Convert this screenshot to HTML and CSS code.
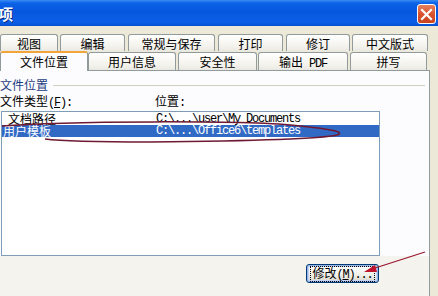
FILE: index.html
```html
<!DOCTYPE html>
<html lang="zh-CN">
<head>
<meta charset="utf-8">
<title>选项</title>
<link rel="stylesheet" href="styles.css">
</head>
<body>
<div class="window">
  <div class="titlebar">
    <span class="title">选项</span>
    <span class="close">
      <svg width="13" height="13" viewBox="0 0 13 13"><path d="M2 2 L11 11 M11 2 L2 11" stroke="#fff" stroke-width="2.2" stroke-linecap="square"/></svg>
    </span>
  </div>
  <div class="body">
    <div class="tabs">
      <div class="row row1">
        <div class="tab w58">视图</div>
        <div class="tab w65 ml2">编辑</div>
        <div class="tab w87 ml3">常规与保存</div>
        <div class="tab w65 ml3">打印</div>
        <div class="tab w64 ml3">修订</div>
        <div class="tab w76 ml2">中文版式</div>
      </div>
      <div class="row row2">
        <div class="tab sel w88">文件位置</div>
        <div class="tab w88">用户信息</div>
        <div class="tab w79 ml2">安全性</div>
        <div class="tab w90 ml1">输出<span class="asc"> PDF</span></div>
        <div class="tab w77 ml2">拼写</div>
      </div>
    </div>
    <div class="panel">
      <div class="top">
        <div class="group-title"><span>文件位置</span><span class="gline"></span></div>
        <div class="labels">
          <span class="col1">文件类型<span class="asc">(<u>F</u>):</span></span>
          <span class="col2">位置<span class="asc">:</span></span>
        </div>
        <div class="listbox">
          <div class="item">
            <span class="name n1">文档路径</span>
            <span class="path asc">C:\...\user\My Documents</span>
          </div>
          <div class="item selected">
            <span class="name n2">用户模板</span>
            <span class="path asc">C:\...\Office6\templates</span>
          </div>
        </div>
      </div>
      <div class="footer">
        <button class="btn"><span class="focus">修改<span class="asc">(<u>M</u>)...</span></span></button>
      </div>
    </div>
  </div>
</div>
<svg class="marks" width="438" height="296" viewBox="0 0 438 296">
  <path d="M2 126 C 60 121, 250 120, 300 126 C 330 129, 346 132, 337 135 C 320 139, 250 141, 150 142 C 95 142, 60 141, 45 139" fill="none" stroke="#6e1a34" stroke-width="1.5"/>
  <path d="M425 252 L 372 269" stroke="#9a1830" stroke-width="1.3" fill="none"/>
  <path d="M364 272 L 375 265 L 377 272 Z" fill="#c0142c"/>
</svg>
</body>
</html>
```
FILE: styles.css
```css
html, body {
  margin: 0;
  padding: 0;
}
body {
  width: 438px;
  height: 296px;
  overflow: hidden;
  background: #ece9d8;
  font-family: "Noto Sans CJK SC", "Liberation Sans", sans-serif;
  font-size: 12px;
  color: #000;
  position: relative;
}
.window {
  width: 438px;
  height: 296px;
  display: flex;
  flex-direction: column;
}
.titlebar {
  height: 26px;
  flex: none;
  display: flex;
  align-items: center;
  justify-content: space-between;
  background: linear-gradient(#3b8cf5 0%, #0c62e6 12%, #0757de 45%, #0a5fe6 85%, #0650d0 100%);
  overflow: hidden;
}
.title {
  margin-left: -17px;
  color: #fff;
  font-weight: bold;
  font-size: 15px;
  line-height: 18px;
  margin-top: 1px;
  text-shadow: 1px 1px 0 #0a2f8a;
}
.close {
  width: 19px;
  height: 20px;
  margin-right: 2px;
  margin-top: 2px;
  box-sizing: border-box;
  border: 1px solid #fff;
  border-radius: 3px;
  background: linear-gradient(#e8805c, #d9542e 50%, #c9431e);
  display: flex;
  align-items: center;
  justify-content: center;
}
.body {
  flex: 1;
  display: flex;
  flex-direction: column;
  padding-top: 8px;
  width: 430px;
}
.tabs {
  display: flex;
  flex-direction: column;
}
.row {
  display: flex;
}
.row1 {
  height: 17px;
}
.row2 {
  height: 19px;
  align-items: flex-end;
}
.tab {
  box-sizing: border-box;
  border: 1px solid #919b9c;
  border-bottom: none;
  border-radius: 3px 3px 0 0;
  background: linear-gradient(#ffffff, #f3f2ec 70%, #e9e8e2);
  text-align: center;
  flex: none;
  white-space: pre;
}
.row1 .tab {
  height: 17px;
  line-height: 17px;
}
.row2 .tab {
  height: 18px;
  line-height: 18px;
}
.row2 .tab.sel {
  height: 20px;
  margin-bottom: -1px;
  background: #fcfcfe;
  border-top: 2px solid #f2a53a;
  border-left-color: #919b9c;
  position: relative;
  z-index: 2;
  line-height: 18px;
}
.w58 { width: 58px; }
.w64 { width: 64px; }
.w65 { width: 65px; }
.w76 { width: 76px; }
.w77 { width: 77px; }
.w79 { width: 79px; }
.w87 { width: 87px; }
.w88 { width: 88px; }
.w90 { width: 90px; }
.ml1 { margin-left: 1px; }
.ml2 { margin-left: 2px; }
.ml3 { margin-left: 3px; }
.asc {
  font-family: "Liberation Mono", "DejaVu Sans Mono", monospace;
  font-size: 12px;
  letter-spacing: -1.2px;
}
.panel {
  flex: 1;
  display: flex;
  flex-direction: column;
  border-top: 1px solid #919b9c;
  border-right: 1px solid #919b9c;
  background: #fcfcfe;
}
.top {
  display: flex;
  flex-direction: column;
  padding-top: 6px;
  background: #fcfcfe;
}
.group-title {
  display: flex;
  align-items: center;
  height: 16px;
  line-height: 16px;
  color: #1e3c82;
}
.gline {
  flex: 1;
  height: 1px;
  background: #d0d0bf;
  margin-left: 5px;
  margin-right: 4px;
}
.labels {
  display: flex;
  height: 14px;
  line-height: 14px;
  margin-top: 1px;
}
.col1 {
  width: 155px;
}
.listbox {
  margin-top: 3px;
  margin-left: 1px;
  width: 379px;
  height: 145px;
  box-sizing: border-box;
  border: 1px solid #7f9db9;
  background: #fff;
  padding-top: 1px;
}
.item {
  display: flex;
  height: 12px;
  line-height: 12px;
  white-space: pre;
}
.item.selected {
  background: #316ac5;
  color: #fff;
}
.name {
  width: 154px;
  box-sizing: border-box;
}
.n1 { padding-left: 6px; }
.n2 { padding-left: 1px; }
.footer {
  flex: 1;
  background: #f4f3ee;
  display: flex;
  align-items: flex-start;
  padding-top: 8px;
}
.btn {
  margin-left: 306px;
  width: 73px;
  height: 19px;
  padding: 0;
  box-sizing: border-box;
  border: 1px solid #003c74;
  border-radius: 3px;
  background: linear-gradient(#ffffff, #f0f0ea 60%, #d8d5c8);
  box-shadow: inset 0 0 0 1px #98b4e8, inset 0 0 0 2px #c4d3f6;
  font-family: "Noto Sans CJK SC", sans-serif;
  font-size: 12px;
  color: #000;
  display: flex;
  align-items: center;
  justify-content: center;
}
.focus {
  outline: 1px dotted #000;
  outline-offset: 0;
  line-height: 12px;
  padding: 0 1px;
}
.marks {
  position: absolute;
  left: 0;
  top: 0;
  pointer-events: none;
}
```
